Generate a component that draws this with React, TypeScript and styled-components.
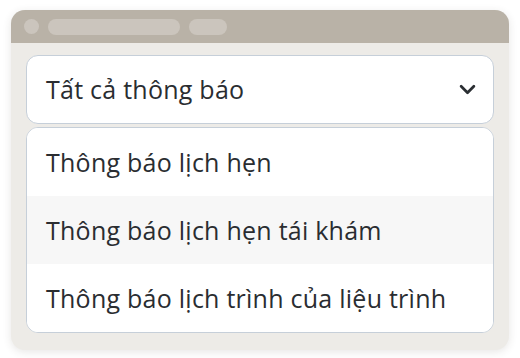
import styled, { createGlobalStyle } from 'styled-components'

const GlobalStyle = createGlobalStyle`
  html, body {
    margin: 0;
    padding: 0;
    background: #ffffff;
  }
  body {
    font-family: 'Open Sans', 'Noto Sans', sans-serif;
    color: #2a2d31;
  }
`

const options = [
  'Thông báo lịch hẹn',
  'Thông báo lịch hẹn tái khám',
  'Thông báo lịch trình của liệu trình',
]

export default function App() {
  const hovered = 1
  return (
    <>
      <GlobalStyle />
      <Page>
        <Window>
          <TitleBar>
            <Dot />
            <Pill $width={132} />
            <Pill $width={38} />
          </TitleBar>
          <WindowBody>
            <SelectBox>
              <SelectValue>Tất cả thông báo</SelectValue>
              <Chevron viewBox="0 0 16 10" aria-hidden="true">
                <path d="M2 2l6 6 6-6" />
              </Chevron>
            </SelectBox>
            <OptionList>
              {options.map((label, i) => (
                <OptionItem key={label} $active={i === hovered}>
                  {label}
                </OptionItem>
              ))}
            </OptionList>
          </WindowBody>
        </Window>
      </Page>
    </>
  )
}

const Page = styled.div`
  width: 520px;
  height: 358px;
  padding: 10px 11px 0;
  box-sizing: border-box;
`

const Window = styled.div`
  width: 498px;
  height: 340px;
  border-radius: 14px;
  overflow: hidden;
  background: #edebe7;
  box-shadow: 0 2px 8px rgba(60, 50, 40, 0.12);
  display: flex;
  flex-direction: column;
`

const TitleBar = styled.div`
  height: 33px;
  flex-shrink: 0;
  background: #b9b2a7;
  display: flex;
  align-items: center;
  gap: 9px;
  padding: 0 13px;
  box-sizing: border-box;
`

const Dot = styled.span`
  width: 15px;
  height: 15px;
  border-radius: 50%;
  background: #cbc5bd;
`

const Pill = styled.span<{ $width: number }>`
  width: ${(p) => p.$width}px;
  height: 16px;
  border-radius: 8px;
  background: #cbc5bd;
`

const WindowBody = styled.div`
  flex: 1;
  padding: 12px 15px 18px;
  display: flex;
  flex-direction: column;
  gap: 3px;
`

const SelectBox = styled.div`
  height: 69px;
  box-sizing: border-box;
  background: #ffffff;
  border: 1px solid #c6cfd9;
  border-radius: 12px;
  display: flex;
  align-items: center;
  justify-content: space-between;
  padding: 0 17px 0 19px;
`

const SelectValue = styled.span`
  font-size: 25px;
  letter-spacing: 0.25px;
  line-height: 1;
`

const Chevron = styled.svg`
  width: 17px;
  height: 11px;
  fill: none;
  stroke: #2b2f33;
  stroke-width: 2.6;
  stroke-linecap: round;
  stroke-linejoin: round;
`

const OptionList = styled.ul`
  margin: 0;
  padding: 0;
  list-style: none;
  background: #ffffff;
  border: 1px solid #c6cfd9;
  border-radius: 12px;
  overflow: hidden;
  display: flex;
  flex-direction: column;
`

const OptionItem = styled.li<{ $active: boolean }>`
  height: 68px;
  display: flex;
  align-items: center;
  padding: 0 19px;
  font-size: 25px;
  letter-spacing: 0.25px;
  line-height: 1;
  background: ${(p) => (p.$active ? '#f7f7f7' : '#ffffff')};
`
